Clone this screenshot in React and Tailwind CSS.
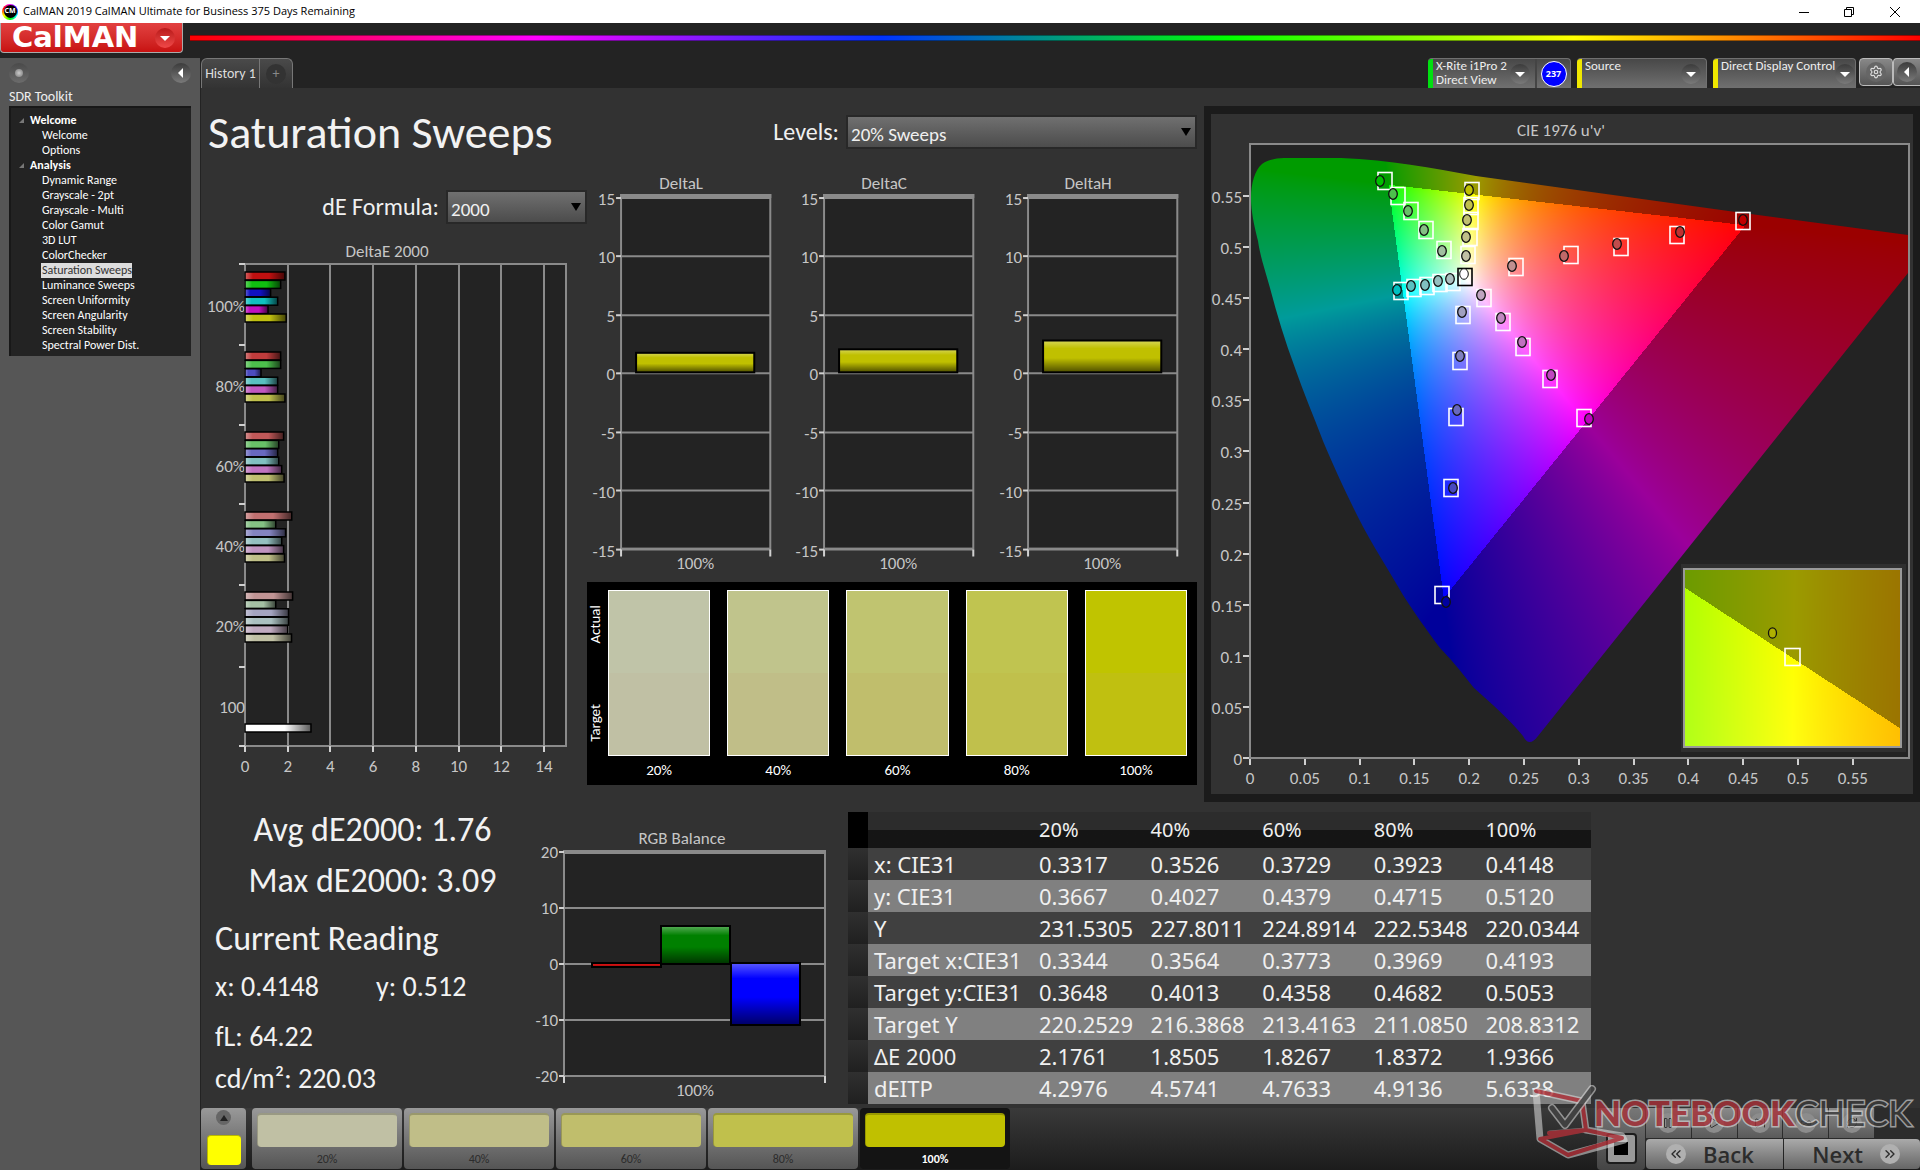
import { useEffect, useRef } from "react";
import { ChevronsLeft, ChevronsRight, Settings, Pause, Play, SkipForward, Infinity as Loop, RefreshCw } from "lucide-react";

const NAV = [
  { title: "Welcome", items: ["Welcome", "Options"] },
  {
    title: "Analysis",
    items: [
      "Dynamic Range",
      "Grayscale - 2pt",
      "Grayscale - Multi",
      "Color Gamut",
      "3D LUT",
      "ColorChecker",
      "Saturation Sweeps",
      "Luminance Sweeps",
      "Screen Uniformity",
      "Screen Angularity",
      "Screen Stability",
      "Spectral Power Dist.",
    ],
  },
];

// red, green, blue, cyan, magenta, yellow
const DELTA_E = [
  { label: "100%", values: [1.87, 1.67, 1.2, 1.53, 1.08, 1.93], colors: ["#c01010", "#10c010", "#1010c0", "#10c0c0", "#c010c0", "#c0c010"] },
  { label: "80%", values: [1.67, 1.67, 0.75, 1.53, 1.53, 1.87], colors: ["#c03c3c", "#4cc04c", "#4c4cc0", "#58c0c0", "#c058c0", "#c0c04c"] },
  { label: "60%", values: [1.81, 1.58, 1.53, 1.58, 1.72, 1.83], colors: ["#c05858", "#68c068", "#6868c0", "#80c0c0", "#c074c0", "#c0c070"] },
  { label: "40%", values: [2.19, 1.44, 1.9, 1.72, 1.81, 1.85], colors: ["#c07070", "#84c084", "#8484c0", "#94c0c0", "#c094c0", "#c0c088"] },
  { label: "20%", values: [2.23, 1.44, 2.04, 2.04, 2, 2.18], colors: ["#c09494", "#a4c0a4", "#a4a4c0", "#aac0c0", "#c0aac0", "#c0c0a4"] },
];

const DELTAS = [
  { title: "DeltaL", value: 1.75 },
  { title: "DeltaC", value: 2.05 },
  { title: "DeltaH", value: 2.8 },
];

const SWATCHES = [
  { label: "20%", actual: "#c0c4a8", target: "#c0c0a4" },
  { label: "40%", actual: "#c0c48c", target: "#c0be88" },
  { label: "60%", actual: "#c0c470", target: "#c0be6c" },
  { label: "80%", actual: "#c0c450", target: "#c0c04c" },
  { label: "100%", actual: "#c0c400", target: "#c0c010" },
];

const TABLE = [
  ["x: CIE31", "0.3317", "0.3526", "0.3729", "0.3923", "0.4148"],
  ["y: CIE31", "0.3667", "0.4027", "0.4379", "0.4715", "0.5120"],
  ["Y", "231.5305", "227.8011", "224.8914", "222.5348", "220.0344"],
  ["Target x:CIE31", "0.3344", "0.3564", "0.3773", "0.3969", "0.4193"],
  ["Target y:CIE31", "0.3648", "0.4013", "0.4358", "0.4682", "0.5053"],
  ["Target Y", "220.2529", "216.3868", "213.4163", "211.0850", "208.8312"],
  ["ΔE 2000", "2.1761", "1.8505", "1.8267", "1.8372", "1.9366"],
  ["dEITP", "4.2976", "4.5741", "4.7633", "4.9136", "5.6338"],
];

// [square x, square y, circle x, circle y, fill]
const POINTS = [
  [174, 67, 169, 67, "#00c000"], [187, 82, 182, 80, "#4cc04c"], [200, 97, 197, 97, "#68c068"], [215, 116, 213, 116, "#84c084"], [233, 136, 231, 137, "#a0c0a0"],
  [261, 77, 258, 76, "#c0c000"], [260, 92, 258, 91, "#c0c04c"], [260, 107, 256, 106, "#c0c070"], [259, 123, 255, 123, "#c0c088"], [257, 141, 255, 142, "#c0c0a4"],
  [305, 153, 301, 152, "#c09090"], [360, 141, 353, 142, "#c06868"], [410, 133, 406, 130, "#c04c4c"], [466, 121, 469, 118, "#c03030"], [532, 107, 532, 106, "#c00000"],
  [190, 177, 186, 176, "#00c0c0"], [203, 174, 200, 172, "#58c0c0"], [216, 172, 214, 171, "#80c0c0"], [229, 169, 227, 167, "#94c0c0"], [242, 168, 239, 165, "#aac0c0"],
  [273, 184, 270, 181, "#c0a4c0"], [292, 208, 290, 204, "#c088c0"], [312, 233, 311, 228, "#c070c0"], [339, 265, 340, 261, "#c048c0"], [373, 304, 378, 305, "#c000c0"],
  [252, 201, 251, 198, "#a0a0c0"], [249, 247, 249, 242, "#8080c0"], [245, 303, 246, 296, "#6868c0"], [240, 374, 242, 374, "#4848c0"], [231, 481, 235, 488, "#0000a0"],
];

const LOCUS =
  "M0 53C0 38 4 25 11 19C18 14 26 13 37 13L90 13C140 15 180 23 225 31L492 68L657 90L657 128L287 591Q278 603 272 591C260 576 240 558 223 543C208 524 198 512 189 503C175 484 162 466 152 450C136 422 120 398 108 374C93 344 82 320 72 296C62 270 52 246 44 223C34 196 26 170 19 143C13 122 9 110 7 96C3 80 0 66 0 53Z";

const RED = [0.4507, 0.5229];
const GREEN = [0.125, 0.5625];
const BLUE = [0.1754, 0.1579];

const side = (u, v, a, b) => (u - b[0]) * (a[1] - b[1]) - (a[0] - b[0]) * (v - b[1]);

function colorAt(u, v) {
  const d = 6 * u - 16 * v + 12;
  const x = (9 * u) / d;
  const y = (4 * v) / d;
  const z = 1 - x - y;
  const rgb = [
    3.2406 * x - 1.5372 * y - 0.4986 * z,
    -0.9689 * x + 1.8758 * y + 0.0415 * z,
    0.0557 * x - 0.204 * y + 1.057 * z,
  ].map((c) => Math.max(0, c));
  const max = Math.max(...rgb);
  const s1 = side(u, v, RED, GREEN) < 0;
  const s2 = side(u, v, GREEN, BLUE) < 0;
  const s3 = side(u, v, BLUE, RED) < 0;
  const peak = s1 === s2 && s2 === s3 ? 255 : 155;
  return rgb.map((c) => Math.pow(c / max, 0.8) * peak);
}

function Gamut({ width, height, toUv, outline }) {
  const ref = useRef(null);
  useEffect(() => {
    const ctx = ref.current.getContext("2d");
    const img = ctx.createImageData(width, height);
    for (let py = 0; py < height; py++) {
      for (let px = 0; px < width; px++) {
        const [u, v] = toUv(px, py);
        const [r, g, b] = colorAt(u, v);
        const i = (py * width + px) * 4;
        img.data[i] = r;
        img.data[i + 1] = g;
        img.data[i + 2] = b;
        img.data[i + 3] = 255;
      }
    }
    ctx.putImageData(img, 0, 0);
    if (outline) {
      ctx.globalCompositeOperation = "destination-in";
      ctx.fill(new Path2D(outline));
    }
  }, []);
  return <canvas ref={ref} width={width} height={height} className="block" />;
}

const mainUv = (px, py) => [px / 1096, (614 - py) / 1021.8];
const insetUv = (px, py) => [0.20392 + (px - 109) / 4518, 0.55291 - (py - 89) / 24280];

function Tick({ x, y, anchor = "middle", children }) {
  return (
    <text x={x} y={y + 6} textAnchor={anchor} fontSize="17" fill="#c6c6c6">
      {children}
    </text>
  );
}

function Shades() {
  return (
    <svg className="absolute size-0" aria-hidden="true">
      <defs>
        <linearGradient id="shadeX">
          <stop offset="0" stopColor="#fff" stopOpacity="0.35" />
          <stop offset="0.2" stopColor="#fff" stopOpacity="0" />
          <stop offset="0.6" stopColor="#000" stopOpacity="0" />
          <stop offset="1" stopColor="#000" stopOpacity="0.65" />
        </linearGradient>
        <linearGradient id="shadeY" x2="0" y2="1">
          <stop offset="0" stopColor="#fff" stopOpacity="0.35" />
          <stop offset="0.25" stopColor="#fff" stopOpacity="0" />
          <stop offset="0.55" stopColor="#000" stopOpacity="0" />
          <stop offset="1" stopColor="#000" stopOpacity="0.6" />
        </linearGradient>
      </defs>
    </svg>
  );
}

function DeltaEChart() {
  const X0 = 44;
  const unit = 21.35;
  const bar = (key, y, value, color) => (
    <g key={key}>
      <rect x={X0} y={y - 4} width={value * unit} height="8" fill={color} />
      <rect x={X0} y={y - 4} width={value * unit} height="8" fill="url(#shadeX)" stroke="#000" strokeWidth="1.5" />
    </g>
  );
  return (
    <svg viewBox="0 0 386 549" className="mt-3 block w-full">
      <Tick x={186} y={15}>DeltaE 2000</Tick>
      <rect x={X0} y="28" width="321" height="482" fill="#232323" stroke="#8a8a8a" strokeWidth="2" />
      {[0, 2, 4, 6, 8, 10, 12, 14].map((n) => (
        <g key={n}>
          <path d={`M${Math.round(X0 + n * unit)} 28V510`} stroke="#8a8a8a" strokeWidth="2" />
          <path d={`M${Math.round(X0 + n * unit)} 510v6`} stroke="#d0d0d0" strokeWidth="2" />
          <Tick x={X0 + n * unit} y={530}>{n}</Tick>
        </g>
      ))}
      {[28, 109, 189, 268, 349, 431, 510].map((y) => (
        <path key={y} d={`M38 ${y}h6`} stroke="#d0d0d0" strokeWidth="2" />
      ))}
      {DELTA_E.map((g, i) => (
        <g key={g.label}>
          <Tick x={44} y={70 + i * 80} anchor="end">{g.label}</Tick>
          {g.values.map((v, j) => bar(j, 40 + i * 80 + j * 8.4, v, g.colors[j]))}
        </g>
      ))}
      <Tick x={44} y={471} anchor="end">100</Tick>
      {bar("white", 492, 3.09, "#fff")}
    </svg>
  );
}

function DeltaChart({ title, value }) {
  const h = value * 11.7;
  return (
    <svg viewBox="0 0 203 405" className="block w-full">
      <Tick x={94} y={14}>{title}</Tick>
      <rect x="34" y="26" width="149" height="353" fill="#232323" stroke="#8a8a8a" strokeWidth="2" />
      <path d="M33 27h151" stroke="#8a8a8a" strokeWidth="4" />
      {[15, 10, 5, 0, -5, -10, -15].map((n) => {
        const y = Math.round(204 - n * 11.7);
        return (
          <g key={n}>
            <path d={`M34 ${y}h149`} stroke="#8a8a8a" strokeWidth="2" />
            <path d={`M29 ${y}h5`} stroke="#d0d0d0" strokeWidth="2" />
            <Tick x={28} y={y + 1} anchor="end">{n}</Tick>
          </g>
        );
      })}
      <path d="M34 380v7M183 380v7" stroke="#d0d0d0" strokeWidth="2" />
      <rect x="49" y={204 - h} width="118" height={h - 1} fill="#c0c000" />
      <rect x="49" y={204 - h} width="118" height={h - 1} fill="url(#shadeY)" stroke="#000" strokeWidth="2" />
      <Tick x={108} y={393}>100%</Tick>
    </svg>
  );
}

function RgbBalance() {
  const bars = [
    { x: 62, y: 137, h: 4, color: "#d01010" },
    { x: 131, y: 100, h: 38, color: "#008000" },
    { x: 201, y: 137, h: 62, color: "#0000ff" },
  ];
  return (
    <svg viewBox="0 0 300 279" className="mt-[23px] block w-full">
      <Tick x={152} y={12}>RGB Balance</Tick>
      <rect x="34" y="25" width="261" height="225" fill="#232323" stroke="#8a8a8a" strokeWidth="2" />
      <path d="M33 26h263" stroke="#8a8a8a" strokeWidth="4" />
      {[20, 10, 0, -10, -20].map((n, i) => (
        <g key={n}>
          <path d={`M34 ${26 + i * 56}h261`} stroke="#8a8a8a" strokeWidth="2" />
          <path d={`M29 ${26 + i * 56}h5`} stroke="#d0d0d0" strokeWidth="2" />
          <Tick x={28} y={26 + i * 56} anchor="end">{n}</Tick>
        </g>
      ))}
      <path d="M34 250v7M295 250v7" stroke="#d0d0d0" strokeWidth="2" />
      {bars.map((b) => (
        <g key={b.color}>
          <rect x={b.x} y={b.y} width="69" height={b.h} fill={b.color} />
          <rect x={b.x} y={b.y} width="69" height={b.h} fill="url(#shadeY)" stroke="#000" strokeWidth="2" />
        </g>
      ))}
      <Tick x={165} y={264}>100%</Tick>
    </svg>
  );
}

function CieChart() {
  const steps = [0, 0.05, 0.1, 0.15, 0.2, 0.25, 0.3, 0.35, 0.4, 0.45, 0.5, 0.55];
  return (
    <svg viewBox="0 0 702 680" className="block w-full">
      <Tick x={350} y={16}>CIE 1976 u'v'</Tick>
      <rect x="39" y="30" width="659" height="614" fill="#232323" stroke="#8a8a8a" strokeWidth="2" />
      {steps.map((s) => (
        <g key={s}>
          <path d={`M${Math.round(39 + s * 1096)} 645v6M32 ${Math.round(644 - s * 1021.8)}h6`} stroke="#d0d0d0" strokeWidth="2" />
          <Tick x={39 + s * 1096} y={664}>{s}</Tick>
          <Tick x={31} y={645 - s * 1021.8} anchor="end">{s}</Tick>
        </g>
      ))}
      <foreignObject x="40" y="31" width="657" height="612">
        <Gamut width={657} height={612} toUv={mainUv} outline={LOCUS} />
      </foreignObject>
      {POINTS.map(([sx, sy, cx, cy, fill]) => (
        <g key={`${sx}-${sy}`}>
          <rect x={sx - 7} y={sy - 8.5} width="14" height="17" fill="none" stroke="#fff" strokeWidth="1.6" />
          <ellipse cx={cx} cy={cy} rx="4.3" ry="5.3" fill={fill} stroke="#111" strokeWidth="1.3" />
        </g>
      ))}
      <rect x="247" y="154.5" width="14" height="17" fill="none" stroke="#000" strokeWidth="1.6" />
      <ellipse cx="253" cy="160" rx="4.3" ry="5.3" fill="#fff" stroke="#111" strokeWidth="1" />
      <rect x="470" y="450" width="225" height="188" fill="#2f2f2f" />
      <foreignObject x="473" y="455" width="218" height="178">
        <Gamut width={218} height={178} toUv={insetUv} />
      </foreignObject>
      <rect x="473" y="455" width="217" height="178" fill="none" stroke="#999" strokeWidth="2" />
      <rect x="574" y="534.5" width="15" height="17" fill="none" stroke="#fff" strokeWidth="1.6" />
      <ellipse cx="561.5" cy="519" rx="4" ry="5.2" fill="#b0b000" stroke="#111" strokeWidth="1.3" />
    </svg>
  );
}

function Picker({ id, label, options, className }) {
  return (
    <div className="flex items-center gap-[7px]">
      <label htmlFor={id} className="text-2xl leading-8 text-[#f0f0f0]">{label}</label>
      <div className={`relative ${className}`}>
        <select
          id={id}
          className="h-[34px] w-full appearance-none border-2 border-[#282828] bg-linear-to-b from-[#707070] to-[#4c4c4c] pt-[6px] pl-[3px] text-[19px] leading-6 text-[#f0f0f0]"
        >
          {options.map((o) => (
            <option key={o}>{o}</option>
          ))}
        </select>
        <svg viewBox="0 0 10 8" className="pointer-events-none absolute top-[13px] right-[6px] h-2 w-[10px]">
          <path d="M0 0h10L5 8z" />
        </svg>
      </div>
    </div>
  );
}

function RoundArrow({ d, className = "" }) {
  return (
    <span className={`flex size-5 items-center justify-center rounded-full bg-linear-to-b from-[#3c3c3c] to-[#7a7a7a] ${className}`}>
      <svg viewBox="0 0 12 12" className="size-3">
        <path d={d} fill="#fff" />
      </svg>
    </span>
  );
}

const DOWN = "M1 4h10L6 9z";
const LEFT = "M8 1v10L3 6z";

function TitleBar() {
  return (
    <div className="flex h-[23px] items-center justify-between bg-white pl-[2px] text-black">
      <div className="flex items-center gap-[5px]">
        <span className="flex size-4 items-center justify-center rounded-full bg-[conic-gradient(#f0f,#00f,#0ff,#0f0,#ff0,#f00,#f0f)]">
          <span className="flex size-[13px] items-center justify-center rounded-full bg-black font-['Open_Sans',sans-serif] text-[7px] font-bold text-white">CM</span>
        </span>
        <span className="font-['Open_Sans',sans-serif] text-[11px]">CalMAN 2019 CalMAN Ultimate for Business 375 Days Remaining</span>
      </div>
      <div className="flex h-full pr-[2px]">
        <button aria-label="Minimize" className="flex w-[45px] items-center justify-center">
          <svg viewBox="0 0 10 10" className="size-[10px]"><path d="M0 5.5h10" stroke="#000" /></svg>
        </button>
        <button aria-label="Restore" className="flex w-[46px] items-center justify-center">
          <svg viewBox="0 0 10 10" className="size-[10px]" fill="none" stroke="#000"><path d="M.5 2.5h7v7h-7zM2.5 2V.5h7v7H8" /></svg>
        </button>
        <button aria-label="Close" className="flex w-[46px] items-center justify-center">
          <svg viewBox="0 0 10 10" className="size-[10px]" stroke="#000"><path d="M0 0l10 10M10 0L0 10" /></svg>
        </button>
      </div>
    </div>
  );
}

function Header() {
  return (
    <header className="flex h-[35px] items-start bg-[#232323]">
      <button className="flex h-[30px] w-[183px] items-center justify-between rounded-b border-x border-b border-[#aaa] bg-linear-to-b from-[#e24040] to-[#c81010] pr-[7px] pl-[11px]">
        <span className="font-['DejaVu_Sans',sans-serif] text-[29px] leading-[29px] font-bold text-white">CalMAN</span>
        <span className="flex size-5 items-center justify-center rounded-full bg-linear-to-b from-[#b81818] to-[#f04848]">
          <svg viewBox="0 0 12 12" className="size-3"><path d={DOWN} fill="#fff" /></svg>
        </span>
      </button>
      <div className="mt-3 ml-[7px] h-[6px] flex-1 border-y border-black/40 bg-[linear-gradient(90deg,#f00_0%,#f0f_20%,#03f_40%,#0f0_60%,#ff0_80%,#f00_100%)]" />
    </header>
  );
}

function Sidebar() {
  return (
    <aside className="w-[200px] shrink-0 bg-[#565656] px-[9px] text-white">
      <div className="flex h-[30px] items-center justify-between">
        <button aria-label="Options" className="flex size-5 items-center justify-center rounded-full bg-linear-to-b from-[#4a4a4a] to-[#6c6c6c]">
          <span className="size-2 rounded-full bg-radial from-[#ccc] to-[#777]" />
        </button>
        <button aria-label="Collapse"><RoundArrow d={LEFT} /></button>
      </div>
      <p className="text-sm leading-[18px] text-[#eee]">SDR Toolkit</p>
      <nav className="flex h-[250px] flex-col justify-between border-t-2 border-l-2 border-[#181818] bg-[#232323] pt-[5px] pb-2 text-xs leading-[15px]">
        {NAV.flatMap((group) => [
          <div key={group.title} className="flex items-center gap-[6px] pl-2 font-bold">
            <svg viewBox="0 0 5 5" className="size-[5px]"><path d="M5 0v5H0z" fill="#777" /></svg>
            {group.title}
          </div>,
          ...group.items.map((item) => (
            <a key={`${group.title}/${item}`} href="#" className="pl-[31px]">
              <span className={item === "Saturation Sweeps" ? "-ml-px block w-fit bg-[#ddd] pl-px text-[#333]" : ""}>{item}</span>
            </a>
          )),
        ])}
      </nav>
    </aside>
  );
}

function Device({ lines, stripe, className, children }) {
  return (
    <div className={`flex h-[30px] items-stretch overflow-hidden rounded-t border-t border-r border-[#707070] bg-linear-to-b from-[#484848] to-[#707070] ${className}`}>
      <span className={`w-[5px] shrink-0 ${stripe}`} />
      <span className="flex-1 pl-[3px] text-[13px] leading-[14px] text-[#eee]">
        {lines.map((l) => (
          <span key={l} className="block whitespace-nowrap">{l}</span>
        ))}
      </span>
      <button aria-label={`${lines[0]} menu`} className="self-center pr-[5px]"><RoundArrow d={DOWN} /></button>
      {children}
    </div>
  );
}

function TabBar() {
  return (
    <div className="flex h-[30px] justify-between bg-[#232323]">
      <div className="flex overflow-hidden rounded-t-md border-x border-t border-[#777] bg-linear-to-b from-[#4a4a4a] to-[#333]">
        <button className="w-[57px] pt-px text-sm whitespace-nowrap text-[#ddd]">History 1</button>
        <button aria-label="Add tab" className="flex w-[33px] items-center justify-center border-l border-[#777]">
          <span className="flex size-5 items-center justify-center rounded-full bg-[#333] text-sm leading-4 text-[#888]">+</span>
        </button>
      </div>
      <div className="flex">
        <Device lines={["X-Rite i1Pro 2", "Direct View"]} stripe="bg-[#00e010]" className="w-[143px]">
          <span className="flex w-[35px] items-center justify-center border-l-2 border-[#444]">
            <span className="flex size-[26px] items-center justify-center rounded-full border border-white bg-[#00f] font-['Open_Sans',sans-serif] text-[9px] font-bold text-white">237</span>
          </span>
        </Device>
        <Device lines={["Source"]} stripe="bg-[#f0e800]" className="ml-[6px] w-[130px]" />
        <Device lines={["Direct Display Control"]} stripe="bg-[#f0e800]" className="ml-[6px] w-[143px]" />
        <button aria-label="Settings" className="ml-[3px] flex h-7 w-[34px] items-center justify-center rounded border border-[#bbb] bg-linear-to-b from-[#888] to-[#555]">
          <span className="flex size-5 items-center justify-center rounded-full bg-[#666]"><Settings className="size-[14px] text-[#ddd]" /></span>
        </button>
        <button aria-label="Hide devices" className="flex h-7 w-[27px] items-center justify-center rounded-l border border-r-0 border-[#bbb] bg-linear-to-b from-[#888] to-[#555]">
          <RoundArrow d={LEFT} />
        </button>
      </div>
    </div>
  );
}

function SwatchPanel() {
  return (
    <div className="mt-[7px] flex h-[203px] bg-black pt-2 pr-[10px] text-[15px] text-white">
      <div className="flex h-[166px] w-[21px] flex-col items-center justify-between pt-[15px] pr-[5px] pb-[14px] leading-4">
        <span className="rotate-180 [writing-mode:vertical-rl]">Actual</span>
        <span className="rotate-180 [writing-mode:vertical-rl]">Target</span>
      </div>
      <div className="grid flex-1 grid-cols-5 gap-[17px]">
        {SWATCHES.map((s) => (
          <div key={s.label} className="text-center">
            <div className="flex h-[166px] flex-col border border-white">
              <div className="flex-1" style={{ background: s.actual }} />
              <div className="flex-1" style={{ background: s.target }} />
            </div>
            <div className="pt-1 leading-5">{s.label}</div>
          </div>
        ))}
      </div>
    </div>
  );
}

function Stats() {
  return (
    <div className="w-[329px] pt-px pl-[14px] text-[28px] text-[#f2f2f2]">
      <div className="text-center text-[34px] leading-[51px]">
        <p>Avg dE2000: 1.76</p>
        <p>Max dE2000: 3.09</p>
      </div>
      <h2 className="pt-[5px] text-[34px] leading-[56px]">Current Reading</h2>
      <div className="flex leading-[40px]">
        <p className="w-[161px]">x: 0.4148</p>
        <p>y: 0.512</p>
      </div>
      <p className="pt-2 leading-[44px]">fL: 64.22</p>
      <p className="leading-[40px]">cd/m²: 220.03</p>
    </div>
  );
}

function ReadingsTable() {
  return (
    <table className="mt-[9px] ml-[18px] h-fit w-[743px] table-fixed border-collapse text-left font-['Noto_Sans',sans-serif] text-[22px] leading-8 text-[#f0f0f0]">
      <colgroup>
        <col className="w-5" />
        <col className="w-[165px]" />
      </colgroup>
      <thead>
        <tr className="h-9 text-xl">
          <th className="bg-black" />
          <th className="bg-linear-to-b from-[#2c2c2c] from-50% to-[#151515] to-50%" />
          {SWATCHES.map((s) => (
            <th key={s.label} className="bg-linear-to-b from-[#2c2c2c] from-50% to-[#151515] to-50% pl-[6px] font-normal">{s.label}</th>
          ))}
        </tr>
      </thead>
      <tbody>
        {TABLE.map((row) => (
          <tr key={row[0]} className="h-8 bg-[#404040] even:bg-[#808080]">
            <td className="bg-linear-to-b from-[#303030] to-[#202020]" />
            {row.map((cell, i) => (
              <td key={i} className="pl-[6px] whitespace-nowrap">{cell}</td>
            ))}
          </tr>
        ))}
      </tbody>
    </table>
  );
}

function Watermark() {
  return (
    <svg viewBox="0 0 384 76" className="pointer-events-none absolute right-[4px] bottom-[10px] w-[384px] opacity-80">
      <g fill="none" strokeLinejoin="round" strokeLinecap="round">
        <path d="M4 7L50 17L54 46L90 52L92 56L36 71L8 55Z" stroke="#ddd" strokeWidth="7" strokeOpacity="0.7" />
        <path d="M18 49L54 46" stroke="#ddd" strokeWidth="5" strokeOpacity="0.5" />
        <path d="M4 7L50 17L54 46L17 49M54 46L90 54L36 71L8 55Z" stroke="#b03038" strokeWidth="4" />
        <path d="M20 24L33 41L60 5" stroke="#ddd" strokeWidth="8" strokeOpacity="0.7" />
        <path d="M20 24L33 41L60 5" stroke="#444" strokeWidth="5" />
      </g>
      <g fontFamily="Lato, sans-serif" fontSize="35" stroke="#ddd" strokeWidth="3" strokeOpacity="0.8" style={{ paintOrder: "stroke" }}>
        <text x="62" y="42" fontWeight="900" fill="#a83038">NOTEBOOK</text>
        <text x="263" y="42" fontWeight="400" fill="#3a3a3a">CHECK</text>
      </g>
    </svg>
  );
}

function Footer() {
  const transport = [
    { name: "Pause", Icon: Pause },
    { name: "Play", Icon: Play },
    { name: "Step", Icon: SkipForward },
    { name: "Continuous", Icon: Loop },
    { name: "Refresh", Icon: RefreshCw },
  ];
  return (
    <footer className="relative flex h-[62px] items-stretch justify-between bg-linear-to-b from-[#3a3a3a] to-[#1c1c1c]">
      <div className="flex gap-[2px] pb-px">
        <div className="mr-1 flex w-[45px] flex-col items-center justify-between rounded bg-linear-to-b from-[#999] to-[#555] pt-[2px] pb-1">
          <button aria-label="Expand" className="flex size-[15px] items-center justify-center rounded-full bg-[#666]">
            <svg viewBox="0 0 8 6" className="h-[6px] w-2"><path d="M0 6h8L4 0z" fill="#222" /></svg>
          </button>
          <span className="h-[30px] w-[34px] rounded-sm border-t border-l border-[#b8b800] bg-[#ff0]" />
        </div>
        {SWATCHES.map((s) => {
          const active = s.label === "100%";
          return (
            <button
              key={s.label}
              className={`flex w-[150px] flex-col items-center rounded px-[5px] pt-[5px] text-xs leading-5 ${
                active ? "bg-[#141414] font-bold text-white" : "bg-linear-to-b from-[#999] to-[#555] text-[#2c2c2c]"
              }`}
            >
              <span className="h-9 w-full rounded border-t-2 border-l border-black/20" style={{ background: active ? "#c0c000" : s.target }} />
              <span className="pt-[2px]">{s.label}</span>
            </button>
          );
        })}
      </div>
      <div className="flex">
        <div className="flex w-[48px] items-end justify-center rounded bg-linear-to-b from-[#777] to-[#444] pb-[6px]">
          <button aria-label="Stop" className="flex size-[31px] items-center justify-center rounded border-2 border-[#1c1c1c] bg-[#999]">
            <span className="h-[13px] w-[14px] bg-black" />
          </button>
        </div>
        <div className="ml-px flex w-[274px] flex-col gap-px">
          <div className="grid h-[30px] grid-cols-6 gap-px">
            {transport.map(({ name, Icon }) => (
              <button key={name} aria-label={name} className="flex items-center justify-center bg-linear-to-b from-[#8a8a8a] to-[#5a5a5a]">
                <span className="flex size-5 items-center justify-center rounded-full bg-[#8c8c8c]"><Icon className="size-3 text-[#333]" /></span>
              </button>
            ))}
            <span className="bg-[#2c2c2c]" />
          </div>
          <div className="grid h-[30px] grid-cols-2 gap-px font-['Open_Sans',sans-serif] text-[22px] leading-7 font-semibold text-[#2c2c2c]">
            <button className="flex items-center gap-[17px] rounded-l bg-linear-to-b from-[#aaa] to-[#666] pl-5">
              <span className="flex size-5 items-center justify-center rounded-full bg-[#b0b0b0]"><ChevronsLeft className="size-4" /></span>
              Back
            </button>
            <button className="flex items-center justify-end gap-[17px] rounded-r bg-linear-to-b from-[#aaa] to-[#666] pr-5">
              Next
              <span className="flex size-5 items-center justify-center rounded-full bg-[#b0b0b0]"><ChevronsRight className="size-4" /></span>
            </button>
          </div>
        </div>
      </div>
      <Watermark />
    </footer>
  );
}

export default function App() {
  return (
    <div className="flex min-h-screen flex-col bg-[#323232] font-[Carlito,Calibri,Lato,sans-serif]">
      <Shades />
      <TitleBar />
      <Header />
      <div className="flex flex-1">
        <Sidebar />
        <div className="flex flex-1 flex-col border-l border-[#232323]">
          <TabBar />
          <main className="flex-1">
            <div className="grid grid-cols-[1003fr_716fr]">
              <div>
                <div className="flex h-[81px] items-center justify-between pt-[6px] pr-[7px] pl-[7px]">
                  <h1 className="text-[46px] leading-[56px] text-[#f2f2f2]">Saturation Sweeps</h1>
                  <Picker id="levels" label="Levels:" options={["20% Sweeps", "25% Sweeps"]} className="w-[351px]" />
                </div>
                <div className="grid grid-cols-[386fr_610fr] pr-[7px]">
                  <div>
                    <div className="flex justify-end pt-[21px]">
                      <Picker id="formula" label="dE Formula:" options={["2000", "1994", "1976"]} className="w-[141px]" />
                    </div>
                    <DeltaEChart />
                  </div>
                  <div>
                    <div className="grid grid-cols-3">
                      {DELTAS.map((d) => (
                        <DeltaChart key={d.title} {...d} />
                      ))}
                    </div>
                    <SwatchPanel />
                  </div>
                </div>
              </div>
              <div className="pt-[18px]">
                <div className="border-x-[7px] border-y-8 border-[#1b1b1b]">
                  <CieChart />
                </div>
              </div>
            </div>
            <div className="flex pt-px">
              <Stats />
              <div className="w-[300px]"><RgbBalance /></div>
              <ReadingsTable />
            </div>
          </main>
          <Footer />
        </div>
      </div>
    </div>
  );
}
